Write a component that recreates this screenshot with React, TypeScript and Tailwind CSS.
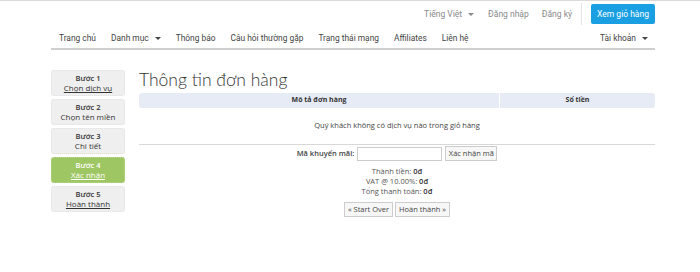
const steps = [
    { n: 1, label: "Chọn dịch vụ", link: true },
    { n: 2, label: "Chọn tên miền", link: false },
    { n: 3, label: "Chi tiết", link: false },
    { n: 4, label: "Xác nhận", link: true, active: true },
    { n: 5, label: "Hoàn thành", link: true },
];

const navItems = ["Trang chủ", "Danh mục", "Thông báo", "Câu hỏi thường gặp", "Trạng thái mạng", "Affiliates", "Liên hệ"];

const Caret = () => <span className="ml-[6px] inline-block border-x-[3px] border-t-[3px] border-x-transparent border-t-current align-middle" />;

const App = () => {
    return (
        <div className="h-[272px] w-[700px] overflow-hidden border-t border-[#d9d9d9] bg-white font-['Open_Sans',sans-serif] text-[#333]">
            <div className="ml-[51px] w-[604px]">
                {/* top bar */}
                <div className="flex h-[25px] items-center justify-end pt-[1px] font-['Roboto',sans-serif] text-[8.5px] text-[#8a8a8a]">
                    <span className="flex items-center">
                        Tiếng Việt
                        <Caret />
                    </span>
                    <span className="ml-[14px]">Đăng nhập</span>
                    <span className="ml-[13px]">Đăng ký</span>
                    <span className="ml-[9px] h-[22px] border-l border-[#e5e5e5]" />
                    <button className="ml-[9px] h-[20px] w-[64px] rounded-[2px] bg-[#1a9fe3] text-[8.5px] text-white">Xem giỏ hàng</button>
                </div>

                {/* nav */}
                <div className="flex h-[24px] items-center border-b-[2px] border-double border-[#cfcfcf] pt-[3px] pl-[8px] pr-[7px] font-['Roboto',sans-serif] text-[8.4px] text-[#444]">
                    <div className="flex items-center gap-[15px]">
                        {navItems.map((item) => (
                            <span key={item} className="flex items-center">
                                {item}
                                {item === "Danh mục" && <Caret />}
                            </span>
                        ))}
                    </div>
                    <span className="ml-auto flex items-center">
                        Tài khoản
                        <Caret />
                    </span>
                </div>

                {/* body */}
                <div className="mt-[20px] flex gap-[14px]">
                    <div className="flex w-[74px] shrink-0 flex-col gap-[3px]">
                        {steps.map((s) => (
                            <div
                                key={s.n}
                                className={
                                    s.active
                                        ? "flex h-[26px] flex-col items-center justify-center rounded-[3px] border border-dotted border-[#b9d78c] bg-[#9ec662] text-[8px] leading-[10px] text-white"
                                        : "flex h-[26px] flex-col items-center justify-center rounded-[3px] border border-dotted border-[#e2e2e2] bg-[#efefef] text-[8px] leading-[10px] text-[#333]"
                                }
                            >
                                <span className="text-[7.5px] font-semibold">Bước {s.n}</span>
                                <span className={s.link ? "underline" : ""}>{s.label}</span>
                            </div>
                        ))}
                    </div>

                    <div className="flex-1">
                        <h1 className="font-['Lato',sans-serif] text-[17.5px] leading-[20px] font-light text-[#333]">Thông tin đơn hàng</h1>
                        <div className="mt-[3px] flex h-[15px] text-[7px] font-bold text-[#333]">
                            <div className="flex flex-1 items-center justify-center rounded-l-[3px] bg-[#e6ebf6]">Mô tả đơn hàng</div>
                            <div className="ml-[1px] flex w-[155px] items-center justify-center rounded-r-[3px] bg-[#e6ebf6]">Số tiền</div>
                        </div>
                        <div className="flex h-[37px] items-center justify-center border-b border-[#d8d8d8] text-[7.5px] text-[#444]">
                            Quý khách không có dịch vụ nào trong giỏ hàng
                        </div>

                        <div className="mt-[1px] flex items-center justify-center text-[7.5px]">
                            <span className="mr-[3px] font-semibold text-[#444]">Mã khuyến mãi:</span>
                            <input className="h-[14px] w-[85px] border border-[#ccc] bg-white" />
                            <button className="ml-[3px] h-[15px] w-[52px] border border-[#ccc] bg-[#f7f7f7] text-[7.5px] text-[#444]">Xác nhận mã</button>
                        </div>

                        <div className="mt-[5px] flex flex-col items-center text-[7.5px] leading-[10px] text-[#555]">
                            <span>
                                Thành tiền: <b className="font-semibold text-[#333]">0đ</b>
                            </span>
                            <span>
                                VAT @ 10.00%: <b className="font-semibold text-[#333]">0đ</b>
                            </span>
                            <span>
                                Tổng thanh toán: <b className="font-semibold text-[#333]">0đ</b>
                            </span>
                        </div>

                        <div className="mt-[6px] flex justify-center gap-[2px] text-[7.5px] text-[#444]">
                            <button className="h-[15px] w-[49px] border border-[#ccc] bg-[#f7f7f7]">« Start Over</button>
                            <button className="h-[15px] w-[55px] border border-[#ccc] bg-[#f7f7f7]">Hoàn thành »</button>
                        </div>
                    </div>
                </div>
            </div>
        </div>
    );
};

export default App;
